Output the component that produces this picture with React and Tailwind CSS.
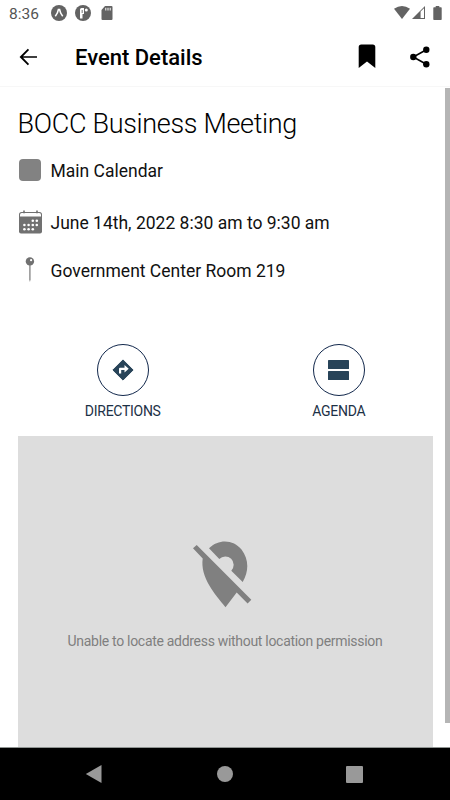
const details = [
  { label: 'Main Calendar', icon: CalendarSwatch, row: 'h-[52px]' },
  { label: 'June 14th, 2022 8:30 am to 9:30 am', icon: CalendarIcon, row: 'h-[52px]' },
  { label: 'Government Center Room 219', icon: PinIcon, row: 'h-11' },
];

const actions = [
  { label: 'DIRECTIONS', icon: DirectionsIcon },
  { label: 'AGENDA', icon: AgendaIcon },
];

export default function App() {
  return (
    <div className="flex h-[800px] w-[450px] flex-col overflow-hidden bg-white font-['Roboto',sans-serif] text-black">
      <StatusBar />

      {/* Header */}
      <header className="flex h-[59px] shrink-0 items-center border-b border-[#f7f7f7] pr-5 pl-[15px]">
        <ArrowBack />
        <h1 className="mt-px ml-[34px] flex-1 text-[22px] leading-7 font-medium whitespace-nowrap">Event Details</h1>
        <BookmarkIcon />
        <ShareIcon />
      </header>

      {/* Scrollable content */}
      <main className="flex min-h-0 flex-1 justify-between">
        <div className="ml-[17.5px] flex w-[415px] flex-col">
          <h2 className="mt-5 h-[34px] text-[27px] leading-[35px] font-light tracking-[-0.32px] whitespace-nowrap">BOCC Business Meeting</h2>

          <div className="mt-1 flex flex-col text-[#111]">
            {details.map((d) => (
              <div key={d.label} className={`flex items-center ${d.row}`}>
                <div className="flex w-[33px] shrink-0">
                  <d.icon />
                </div>
                <span className="text-[17.5px] leading-6 whitespace-nowrap">{d.label}</span>
              </div>
            ))}
          </div>

          <div className="mt-[51px] grid grid-cols-2 text-[#1c3146]">
            {actions.map((a) => (
              <button key={a.label} className="flex flex-col items-center first:pl-[3px] last:pl-[20px]">
                <span className="flex size-[52px] items-center justify-center rounded-full border border-[#12284c]">
                  <a.icon />
                </span>
                <span className="mt-[5px] text-[14px] leading-5 tracking-[-0.28px] whitespace-nowrap">{a.label}</span>
              </button>
            ))}
          </div>

          {/* Map placeholder */}
          <div className="mt-[15px] flex flex-1 flex-col items-center bg-[#ddd] pt-[104px] text-[#7f7f7f]">
            <LocationOff />
            <p className="mt-[23px] text-[14px] leading-5 tracking-[-0.3px] whitespace-nowrap">Unable to locate address without location permission</p>
          </div>
        </div>
        <div className="mt-px h-[635px] w-[5px] bg-[#b5b5b5]" />
      </main>

      {/* Android navigation */}
      <nav className="flex h-[53px] shrink-0 items-center justify-between border-t border-[#8f9492] bg-black pr-[87px] pl-[85px]">
        <svg className="h-[18px] w-[18px]" viewBox="0 0 18 18" fill="#999"><path d="M.8 9 16.5 0v18z" /></svg>
        <svg className="size-4" viewBox="0 0 16 16" fill="#999"><circle cx="8" cy="8" r="8" /></svg>
        <span className="size-[17px] rounded-[1px] bg-[#999]" />
      </nav>
    </div>
  );
}

function StatusBar() {
  return (
    <div className="flex h-7 shrink-0 items-center pr-2 pl-[9px] text-[#555]">
      <span className="w-[41.5px] text-[15.5px] leading-7">8:36</span>
      <svg className="mb-0.5 size-4" viewBox="0 0 16 16">
        <circle cx="8" cy="8" r="8" fill="#636363" />
        <path d="M4.3 11.2C6 9.2 7 6.8 7.4 4.6h1.2C9 6.8 10 9.2 11.7 11.2" fill="none" stroke="#fff" strokeWidth="1.6" />
      </svg>
      <svg className="mb-0.5 ml-2 size-4" viewBox="0 0 16 16">
        <circle cx="8" cy="8" r="8" fill="#636363" />
        <path d="M5 4.5Q5 3 6.5 3H9v6H7.5v4.5H5z" fill="#fff" />
        <path d="M6.7 5h.9v3h-.9z" fill="#636363" />
        <circle cx="11.3" cy="5" r="1.5" fill="#fff" />
      </svg>
      <svg className="mb-0.5 ml-[10px] h-[14px] w-[12px]" viewBox="0 0 12 14">
        <path d="M4 0h6.5q1 0 1 1v12q0 1-1 1h-9q-1 0-1-1V4z" fill="#636363" />
        <path d="M4.8 1.8v2.7M7 1.8v2.7M9.2 1.8v2.7" stroke="#fff" strokeWidth="1" />
      </svg>
      <div className="flex-1" />
      <svg className="mb-[3px] h-[13px] w-4" viewBox="0 0 16 13" fill="#636363">
        <path d="M0 2.8Q8-2.8 16 2.8L8 13z" />
      </svg>
      <svg className="mb-[3px] ml-[2px] h-[13px] w-[13px]" viewBox="0 0 13 13">
        <path d="M0 13 13 0v13z" fill="#636363" />
        <path d="M8.6 5.6 12 2.2V12H8.6z" fill="#fff" />
      </svg>
      <svg className="mb-[2px] ml-2 h-[14px] w-[9px]" viewBox="0 0 9 14" fill="#636363">
        <path d="M2.7 0h3.6v1.2H8q.7 0 .7.8v11.2q0 .8-.7.8H1q-.7 0-.7-.8V2q0-.8.7-.8h1.7z" />
      </svg>
    </div>
  );
}

function ArrowBack() {
  return (
    <svg className="size-[26px] shrink-0" viewBox="0 0 24 24">
      <path d="M20.3 11.2H7.4l5.6-5.6-1.2-1.2L4.2 12l7.6 7.6 1.2-1.2-5.6-5.6h12.9z" />
    </svg>
  );
}

function BookmarkIcon() {
  return (
    <svg className="mr-[33px] mb-0.5 h-6 w-[18px] shrink-0" viewBox="0 0 18 24">
      <path d="M3.3.5h11.4Q17.3.5 17.3 3.1V24L9 17.5.7 24V3.1Q.7.5 3.3.5z" />
    </svg>
  );
}

function ShareIcon() {
  return (
    <svg className="mb-px h-[22px] w-[21px] shrink-0" viewBox="0 0 21 22">
      <path d="M17.3 3.8 4.3 11l13 7.3" fill="none" stroke="#000" strokeWidth="1.6" />
      <circle cx="17.3" cy="3.8" r="3.2" />
      <circle cx="4.3" cy="11" r="3.2" />
      <circle cx="17.3" cy="18.3" r="3.2" />
    </svg>
  );
}

function CalendarSwatch() {
  return <span className="mb-[2px] ml-[1.5px] size-[21.5px] rounded-[4px] bg-[#828282]" />;
}

function CalendarIcon() {
  return (
    <svg className="mb-[2px] ml-[1.5px] h-6 w-[23px]" viewBox="0 0 23 24">
      <path d="M2.5 2h18Q23 2 23 4.5v17q0 2-2 2H2q-2 0-2-2v-17Q0 2 2.5 2z" fill="#717171" />
      <path d="M1 6.5V4.8Q1 3 2.8 3h17.4Q22 3 22 4.8v1.7z" fill="#fff" />
      <path d="M5 .5v2.8M18 .5v2.8" stroke="#717171" strokeWidth="1.6" />
      <g fill="#fff">
        <circle cx="13.8" cy="10.8" r="1.3" />
        <circle cx="17.8" cy="10.8" r="1.3" />
        <circle cx="5.4" cy="15" r="1.3" />
        <circle cx="9.6" cy="15" r="1.3" />
        <circle cx="13.8" cy="15" r="1.3" />
        <circle cx="17.8" cy="15" r="1.3" />
        <circle cx="5.4" cy="19.2" r="1.3" />
        <circle cx="9.6" cy="19.2" r="1.3" />
        <circle cx="13.8" cy="19.2" r="1.3" />
      </g>
    </svg>
  );
}

function PinIcon() {
  return (
    <svg className="mb-[3px] ml-[7.5px] h-[25px] w-[10px]" viewBox="0 0 10 25">
      <path d="M4.2 7h1.4v15.5L4.9 25l-.7-2.5z" fill="#8a8a8a" />
      <circle cx="4.9" cy="4.4" r="4.2" fill="#717171" />
      <circle cx="6.1" cy="3.2" r="1.1" fill="#fff" />
    </svg>
  );
}

function DirectionsIcon() {
  return (
    <svg className="size-[22px]" viewBox="0 0 22 22">
      <path d="m11 .9 10.1 10.1L11 21.1.9 11z" fill="#284459" stroke="#284459" strokeWidth="1" strokeLinejoin="round" />
      <path d="M7 14.5V9.7q0-1 1-1h4.5V6l4.2 3.8-4.2 3.8v-2.7H9.2v3.6z" fill="#fff" />
    </svg>
  );
}

function AgendaIcon() {
  return (
    <svg className="h-5 w-[21px]" viewBox="0 0 21 20" fill="#284459">
      <rect width="21" height="9" rx=".6" />
      <rect y="11" width="21" height="9" rx=".6" />
    </svg>
  );
}

function LocationOff() {
  return (
    <svg className="mr-[7px] h-[68px] w-[60px]" viewBox="0 0 60 68" fill="#808080">
      <path d="M1 8.2 4.7 5 59.3 59.7l-3.7 3.7-10.9-10.8L33.5 67.2C22.5 54 8 37 10.7 18.6z" />
      <path d="M17 8.2c10-10 25-8.5 32.5 1.3 7.3 9.7 7.7 21 1.2 32.5L39.3 30.7A8 8 0 0 0 27.3 19z" />
    </svg>
  );
}
